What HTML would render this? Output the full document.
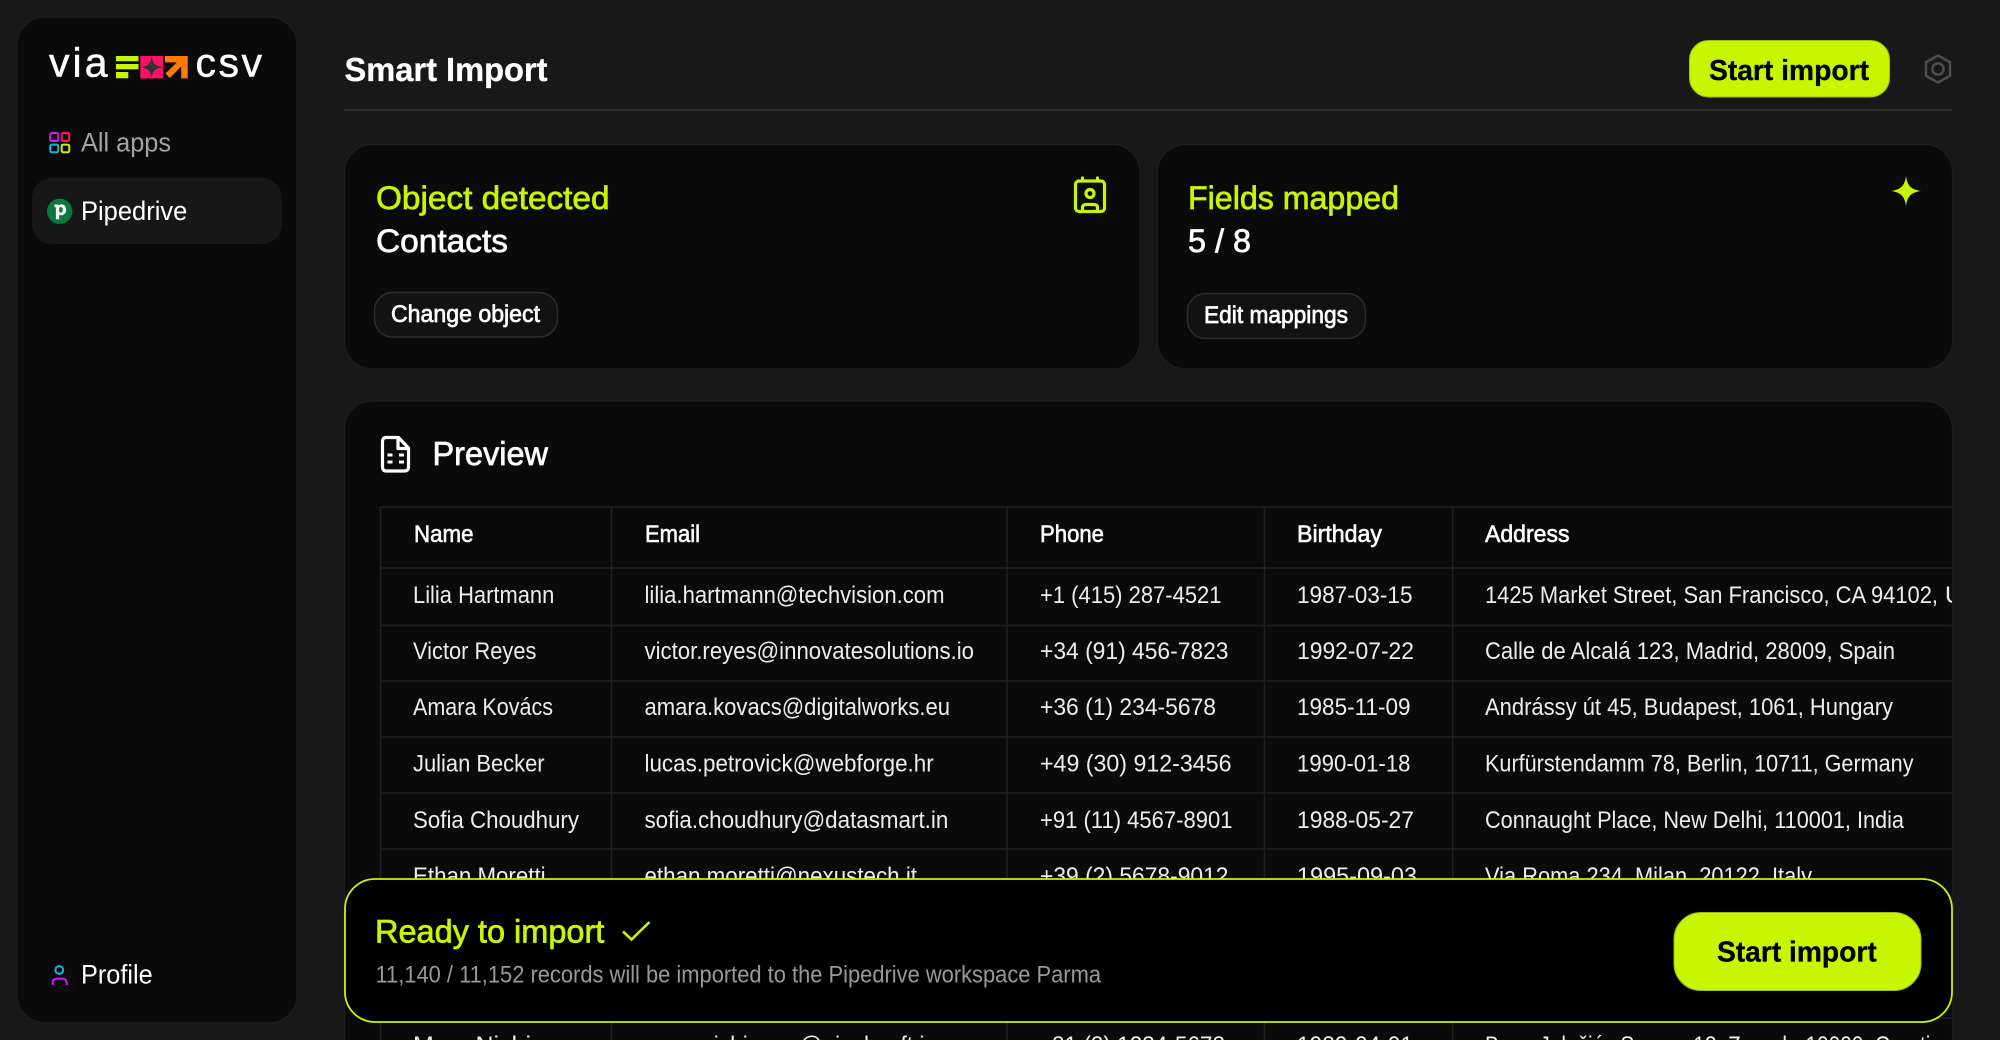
<!DOCTYPE html>
<html lang="en">
<head>
<meta charset="utf-8">
<title>Smart Import</title>
<style>
html,body{margin:0;padding:0;background:#181818;width:2000px;height:1040px;overflow:hidden}
svg{display:block}
text{font-family:"Liberation Sans",Arial,sans-serif;white-space:pre}
.lime{fill:#c6f600}
.w{fill:#fff}
.m{stroke-width:.7}
.lime.m{stroke:#c6f600}
.w.m{stroke:#fff}
.b{font-weight:700}
.k{fill:#000;stroke:#000;stroke-width:.3}
.ws{stroke:#fff;stroke-width:.3}
.t{fill:#ededed;font-size:24px}
.h{fill:#fff;stroke:#fff;stroke-width:.6;font-size:24px}
.g{fill:#a3a3a3}
</style>
</head>
<body>
<svg width="2000" height="1040" viewBox="0 0 2000 1040" xmlns="http://www.w3.org/2000/svg">
<defs>
<clipPath id="tc"><rect x="344" y="400" width="1608" height="640"/></clipPath>
</defs>
<rect width="2000" height="1040" fill="#181818"/>

<!-- Sidebar -->
<rect x="17" y="17" width="280" height="1006" rx="28" fill="#0a0a0a" stroke="#1c1c1c" stroke-width="1.5"/>
<text x="49" y="76.7" font-size="41" class="w" stroke="#fff" stroke-width=".5" textLength="58.5" lengthAdjust="spacing">via</text>
<rect x="116" y="56" width="22.5" height="5.2" fill="#c6f600"/>
<rect x="116" y="64" width="22.5" height="5.3" fill="#c6f600"/>
<rect x="116" y="72" width="12.3" height="6.3" fill="#c6f600"/>
<rect x="140.3" y="56" width="22.7" height="22.4" fill="#ff1068"/>
<path d="M151.7 56C152.7 63.5 155 66 163 67.2C155 68.4 152.7 70.9 151.7 78.4C150.7 70.9 148.4 68.4 140.3 67.2C148.4 66 150.7 63.5 151.7 56Z" fill="#333"/>
<path d="M165 56H187.7V78.4H181.2V66.5L169.7 78L165.5 73.4L176.8 62.4H165Z" fill="#ff7a00"/>
<text x="195.5" y="76.7" font-size="41" class="w" stroke="#fff" stroke-width=".5" textLength="66.5" lengthAdjust="spacing">csv</text>

<g fill="none" stroke-width="2">
<rect x="50.2" y="133" width="8" height="8" rx="1.6" stroke="#d21bf0"/>
<rect x="61.7" y="133" width="7.6" height="8" rx="1.6" stroke="#ff1068"/>
<rect x="50.2" y="144.6" width="8" height="7.6" rx="1.6" stroke="#10b4dc"/>
<rect x="61.7" y="144.6" width="7.6" height="7.6" rx="1.6" stroke="#c6f600"/>
</g>
<text x="81" y="151.7" font-size="27" class="g" textLength="90" lengthAdjust="spacingAndGlyphs">All apps</text>

<rect x="32" y="178" width="250" height="66" rx="20" fill="#171717"/>
<circle cx="59.7" cy="211.3" r="12.7" fill="#0a7a3c"/>
<path d="M54.5 204.5H58.6V205.5C59.5 204.6 60.6 204.2 61.6 204.2C64.4 204.2 66.2 206.8 66.2 209.8C66.2 212.8 64.3 215.3 61.4 215.3C60.4 215.3 59.6 215 59.2 214.4V219.3H55.9V207.3H54.5ZM60.8 207C59.8 207 59.2 207.6 59.2 208.4V211.2C59.2 212 59.9 212.6 60.8 212.6C62 212.6 62.8 211.4 62.8 209.8C62.8 208.2 62 207 60.8 207Z" fill="#fff" fill-rule="evenodd"/>
<text x="81" y="220" font-size="27" class="w" textLength="106.3" lengthAdjust="spacingAndGlyphs">Pipedrive</text>

<circle cx="59.3" cy="970" r="3.9" fill="none" stroke="#10b4dc" stroke-width="2"/>
<path d="M52.7 985V982.5C52.7 979.9 54.8 978.6 57 978.6H62C64.4 978.6 66.7 979.9 66.7 982.5V985" fill="none" stroke="#d21bf0" stroke-width="2"/>
<text x="81" y="983.3" font-size="27" class="w" textLength="71.7" lengthAdjust="spacingAndGlyphs">Profile</text>

<!-- Header -->
<text x="344.5" y="81" font-size="33" class="w b ws" textLength="203" lengthAdjust="spacingAndGlyphs">Smart Import</text>
<rect x="344" y="109" width="1608" height="2" fill="#292929"/>
<rect x="1689.5" y="40.5" width="200" height="56.5" rx="19" fill="#c6f600" stroke="#9dbf10" stroke-width="1"/>
<text x="1709" y="80" font-size="29" class="k b" textLength="160" lengthAdjust="spacingAndGlyphs">Start import</text>
<path d="M1938 55.5L1950 62.2V75.8L1938 82.5L1926 75.8V62.2Z" fill="none" stroke="#4d4d4d" stroke-width="2.5" stroke-linejoin="round"/>
<circle cx="1938" cy="69" r="5.6" fill="none" stroke="#4d4d4d" stroke-width="2.5"/>

<!-- Card 1 -->
<rect x="344.5" y="144.5" width="795.5" height="224.5" rx="28" fill="#0a0a0a" stroke="#1d1d1d" stroke-width="1.2"/>
<text x="376" y="209" font-size="32" class="lime m" textLength="233.5" lengthAdjust="spacingAndGlyphs">Object detected</text>
<text x="376" y="252" font-size="32" class="w m" textLength="132" lengthAdjust="spacingAndGlyphs">Contacts</text>
<rect x="374.5" y="292.5" width="183" height="44.5" rx="18" fill="#121212" stroke="#2c2c2c" stroke-width="1.5"/>
<text x="391" y="322" font-size="24" class="w m" textLength="149" lengthAdjust="spacingAndGlyphs">Change object</text>
<g fill="none" stroke="#c6f600" stroke-width="3.2" stroke-linecap="round" stroke-linejoin="round">
<rect x="1075.5" y="181" width="29" height="30.5" rx="3.5"/>
<path d="M1082.5 178V180M1097.5 178V180"/>
<circle cx="1090" cy="193.5" r="4"/>
<path d="M1082.5 211V207.5C1082.5 205.5 1084 204.5 1086 204.5H1094C1096 204.5 1097.5 205.5 1097.5 207.5V211"/>
</g>

<!-- Card 2 -->
<rect x="1157.5" y="144.5" width="795" height="224.5" rx="28" fill="#0a0a0a" stroke="#1d1d1d" stroke-width="1.2"/>
<text x="1188" y="209" font-size="32" class="lime m" textLength="211" lengthAdjust="spacingAndGlyphs">Fields mapped</text>
<text x="1188" y="252" font-size="32" class="w m" textLength="63" lengthAdjust="spacingAndGlyphs">5 / 8</text>
<rect x="1187.5" y="293.5" width="178" height="45" rx="18" fill="#121212" stroke="#2c2c2c" stroke-width="1.5"/>
<text x="1204" y="323" font-size="24" class="w m" textLength="144" lengthAdjust="spacingAndGlyphs">Edit mappings</text>
<path d="M1906 176C1907.5 186 1911 189.5 1921 191C1911 192.5 1907.5 196 1906 206C1904.5 196 1901 192.5 1891 191C1901 189.5 1904.5 186 1906 176Z" fill="#c6f600"/>

<!-- Preview card -->
<path d="M344.5 1060V429C344.5 413 357 401 373 401H1924C1940 401 1952.5 413 1952.5 429V1060Z" fill="#0a0a0a" stroke="#1d1d1d" stroke-width="1.2"/>
<g fill="none" stroke="#fff" stroke-width="3.2" stroke-linejoin="round">
<path d="M386 437.5H398.5L408.5 448V467C408.5 469.5 407 471 404.5 471H386C383.8 471 382.5 469.5 382.5 467V441.5C382.5 439 383.8 437.5 386 437.5Z"/>
<path d="M398 438V448.5H408.5"/>
</g>
<g fill="#fff">
<rect x="387.5" y="453.5" width="5" height="3"/><rect x="399" y="453.5" width="5" height="3"/>
<rect x="387.5" y="460.5" width="5" height="3"/><rect x="399" y="460.5" width="5" height="3"/>
</g>
<text x="432.5" y="465" font-size="33" class="w m" textLength="115.5" lengthAdjust="spacingAndGlyphs">Preview</text>

<!-- Table -->
<g clip-path="url(#tc)">
<g stroke="#202020" stroke-width="1.5" fill="none">
<path d="M380 507H1952M380 568H1952M380 625.5H1952M380 681H1952M380 737H1952M380 793H1952M380 849H1952M380 905H1952M380 961H1952M380 1018H1952"/>
<path d="M380.5 507V1040M611.5 507V1040M1007 507V1040M1264.5 507V1040M1452.7 507V1040"/>
</g>
<text x="414" y="542" class="h" textLength="59.5" lengthAdjust="spacingAndGlyphs">Name</text>
<text x="645" y="542" class="h" textLength="55" lengthAdjust="spacingAndGlyphs">Email</text>
<text x="1040" y="542" class="h" textLength="64" lengthAdjust="spacingAndGlyphs">Phone</text>
<text x="1297" y="542" class="h" textLength="85" lengthAdjust="spacingAndGlyphs">Birthday</text>
<text x="1485" y="542" class="h" textLength="84.5" lengthAdjust="spacingAndGlyphs">Address</text>

<text x="413" y="603" class="t" textLength="141.3" lengthAdjust="spacingAndGlyphs">Lilia Hartmann</text>
<text x="644.5" y="603" class="t" textLength="300" lengthAdjust="spacingAndGlyphs">lilia.hartmann@techvision.com</text>
<text x="1040" y="603" class="t" textLength="181.5" lengthAdjust="spacingAndGlyphs">+1 (415) 287-4521</text>
<text x="1297" y="603" class="t" textLength="115.5" lengthAdjust="spacingAndGlyphs">1987-03-15</text>
<text x="1485" y="603" class="t" textLength="453" lengthAdjust="spacingAndGlyphs">1425 Market Street, San Francisco, CA 94102,</text>
<text x="1945" y="603" class="t">USA</text>

<text x="413" y="659" class="t" textLength="123.4" lengthAdjust="spacingAndGlyphs">Victor Reyes</text>
<text x="644.5" y="659" class="t" textLength="329.5" lengthAdjust="spacingAndGlyphs">victor.reyes@innovatesolutions.io</text>
<text x="1040" y="659" class="t" textLength="188.5" lengthAdjust="spacingAndGlyphs">+34 (91) 456-7823</text>
<text x="1297" y="659" class="t" textLength="117" lengthAdjust="spacingAndGlyphs">1992-07-22</text>
<text x="1485" y="659" class="t" textLength="410" lengthAdjust="spacingAndGlyphs">Calle de Alcalá 123, Madrid, 28009, Spain</text>

<text x="413" y="715" class="t" textLength="140" lengthAdjust="spacingAndGlyphs">Amara Kovács</text>
<text x="644.5" y="715" class="t" textLength="305.5" lengthAdjust="spacingAndGlyphs">amara.kovacs@digitalworks.eu</text>
<text x="1040" y="715" class="t" textLength="176" lengthAdjust="spacingAndGlyphs">+36 (1) 234-5678</text>
<text x="1297" y="715" class="t" textLength="113.5" lengthAdjust="spacingAndGlyphs">1985-11-09</text>
<text x="1485" y="715" class="t" textLength="408" lengthAdjust="spacingAndGlyphs">Andrássy út 45, Budapest, 1061, Hungary</text>

<text x="413" y="771.5" class="t" textLength="131.6" lengthAdjust="spacingAndGlyphs">Julian Becker</text>
<text x="644.5" y="771.5" class="t" textLength="289.2" lengthAdjust="spacingAndGlyphs">lucas.petrovick@webforge.hr</text>
<text x="1040" y="771.5" class="t" textLength="191.5" lengthAdjust="spacingAndGlyphs">+49 (30) 912-3456</text>
<text x="1297" y="771.5" class="t" textLength="113.5" lengthAdjust="spacingAndGlyphs">1990-01-18</text>
<text x="1485" y="771.5" class="t" textLength="428.5" lengthAdjust="spacingAndGlyphs">Kurfürstendamm 78, Berlin, 10711, Germany</text>

<text x="413" y="828" class="t" textLength="166" lengthAdjust="spacingAndGlyphs">Sofia Choudhury</text>
<text x="644.5" y="828" class="t" textLength="303.8" lengthAdjust="spacingAndGlyphs">sofia.choudhury@datasmart.in</text>
<text x="1040" y="828" class="t" textLength="192.5" lengthAdjust="spacingAndGlyphs">+91 (11) 4567-8901</text>
<text x="1297" y="828" class="t" textLength="117" lengthAdjust="spacingAndGlyphs">1988-05-27</text>
<text x="1485" y="828" class="t" textLength="419" lengthAdjust="spacingAndGlyphs">Connaught Place, New Delhi, 110001, India</text>

<text x="413" y="884" class="t" textLength="132.6" lengthAdjust="spacingAndGlyphs">Ethan Moretti</text>
<text x="644.5" y="884" class="t" textLength="272.5" lengthAdjust="spacingAndGlyphs">ethan.moretti@nexustech.it</text>
<text x="1040" y="884" class="t" textLength="188.5" lengthAdjust="spacingAndGlyphs">+39 (2) 5678-9012</text>
<text x="1297" y="884" class="t" textLength="120" lengthAdjust="spacingAndGlyphs">1995-09-03</text>
<text x="1485" y="884" class="t" textLength="327" lengthAdjust="spacingAndGlyphs">Via Roma 234, Milan, 20122, Italy</text>

<text x="413" y="1053" class="t" textLength="118" lengthAdjust="spacingAndGlyphs">Marc Nishi</text>
<text x="644.5" y="1053" class="t" textLength="292.5" lengthAdjust="spacingAndGlyphs">marc.nishimura@pixelcraft.io</text>
<text x="1052" y="1053" class="t" textLength="173" lengthAdjust="spacingAndGlyphs">81 (3) 1234-5678</text>
<text x="1297" y="1053" class="t" textLength="116" lengthAdjust="spacingAndGlyphs">1989-04-01</text>
<text x="1485" y="1053" class="t" textLength="457" lengthAdjust="spacingAndGlyphs">Bana Jelačića Square 12, Zagreb, 10000, Croatia</text>
</g>

<!-- Bottom bar -->
<rect x="345" y="879" width="1607" height="143" rx="30" fill="#000" stroke="#c6f600" stroke-width="1.8"/>
<text x="375" y="942.7" font-size="32" class="lime m" textLength="229.3" lengthAdjust="spacingAndGlyphs">Ready to import</text>
<path d="M623 931.5L631.5 939.5L649.5 922" fill="none" stroke="#c6f600" stroke-width="2.6"/>
<text x="375.5" y="982.7" font-size="24" fill="#999" textLength="725.5" lengthAdjust="spacingAndGlyphs">11,140 / 11,152 records will be imported to the Pipedrive workspace Parma</text>
<rect x="1674" y="912.5" width="247" height="78" rx="27" fill="#c6f600" stroke="#9dbf10" stroke-width="1"/>
<text x="1717" y="961.7" font-size="29" class="k b" textLength="159.7" lengthAdjust="spacingAndGlyphs">Start import</text>
</svg>
</body>
</html>
